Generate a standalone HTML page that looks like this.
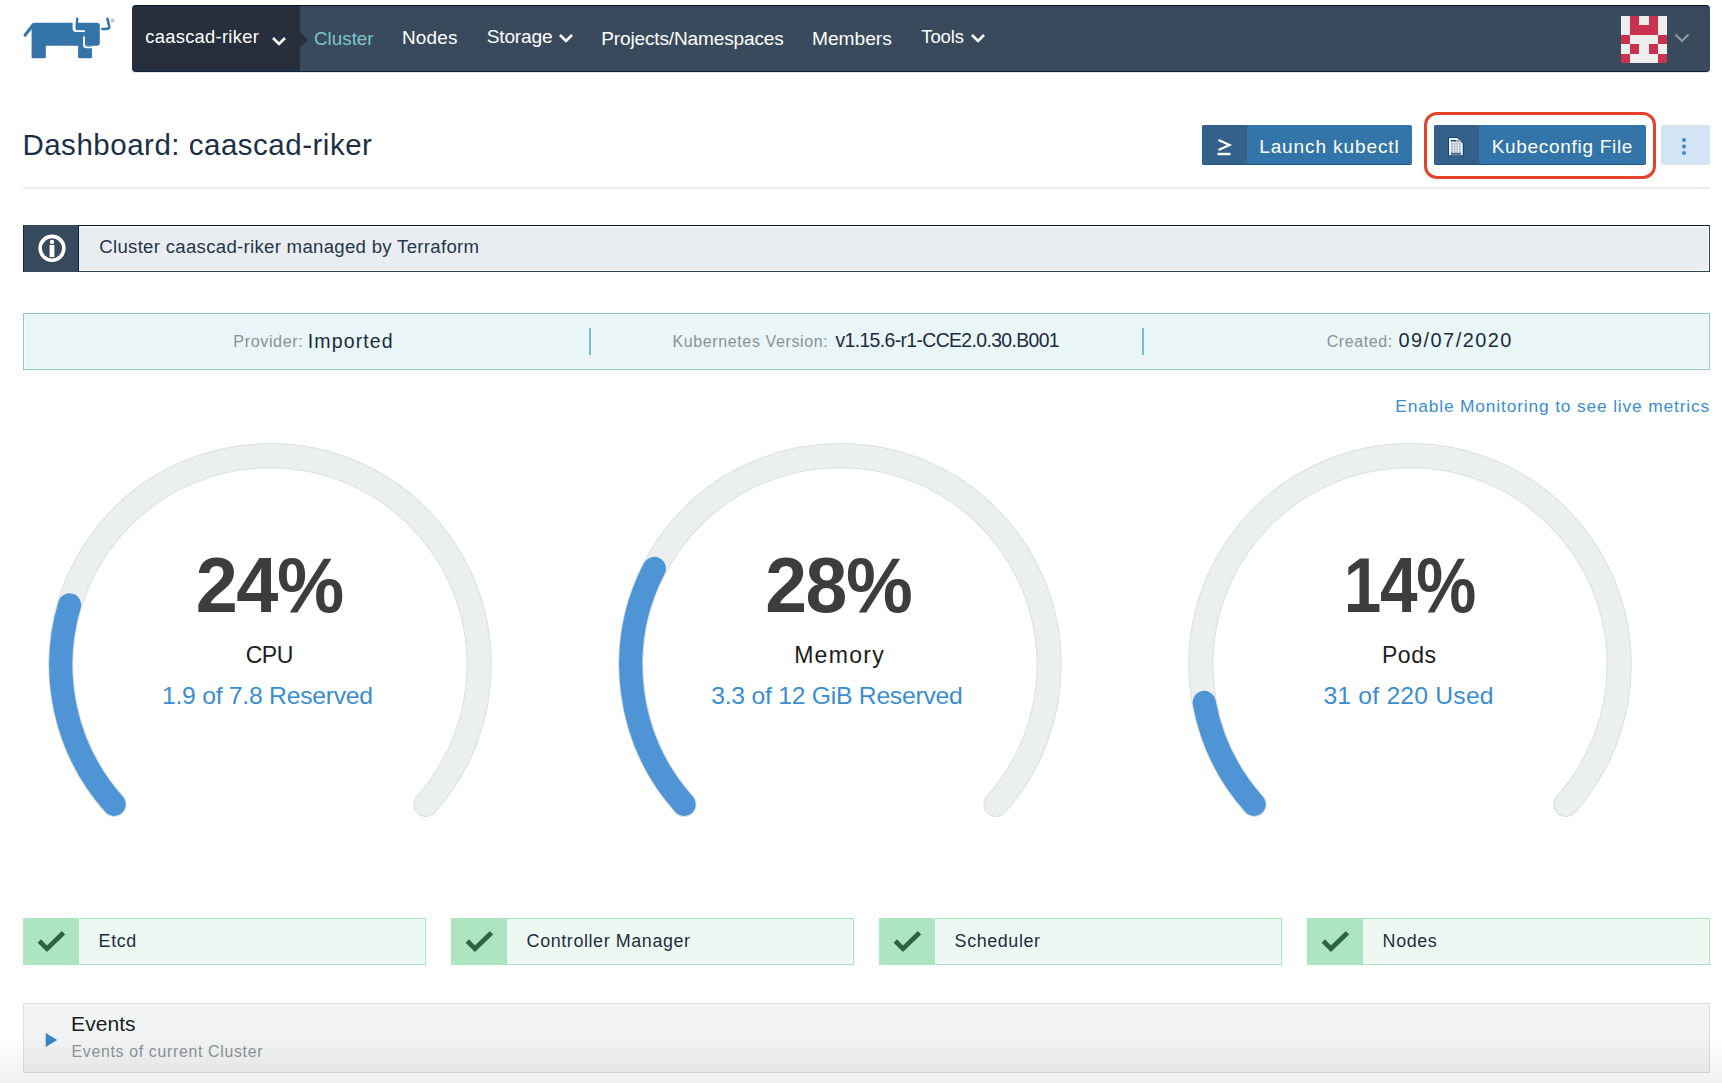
<!DOCTYPE html>
<html><head><meta charset="utf-8">
<style>
*{margin:0;padding:0;box-sizing:border-box}
html,body{width:1722px;height:1083px;overflow:hidden;background:#fff;font-family:"Liberation Sans",sans-serif}
.abs{position:absolute}
.t{position:absolute;white-space:nowrap;line-height:1}
#nav{left:132px;top:5px;width:1578px;height:67px;background:#394a5d;border-radius:4px;border-top:1px solid #06112e;border-bottom:1.5px solid #0b2440;overflow:hidden;box-shadow:0 1px 1px rgba(0,0,0,.12)}
#navdark{left:0;top:0;width:168px;height:100%;background:#262f3b}
#hr{left:23px;top:186.5px;width:1687px;height:2px;background:#e8edef}
.btn{position:absolute;top:125px;height:40px;background:#3475a9;border-radius:2px;overflow:hidden;border-bottom:1px solid #1f5887}
.btn .ic{position:absolute;left:0;top:0;width:45px;height:40px;background:#336189}
#banner{left:23px;top:225px;width:1687px;height:46.7px;background:#e9ecf0;border-top:1px solid #0f1730;border-bottom:1.5px solid #2d4661;border-right:1.5px solid #2d4661;box-shadow:inset 0 1.5px 0 #f5f7f9,inset -1.5px -1.5px 0 #f5f7f9}
#banner .ic{position:absolute;left:0;top:-1px;width:56px;height:46.7px;background:#384a5e;border-left:1px solid #0c2a4a;border-right:1px solid #0c1f38}
#strip{left:23px;top:313px;width:1687px;height:57px;background:#e9f5f6;border:1.5px solid #8cc7ce;box-shadow:inset 0 0 0 1px #f3fafb}
.card{position:absolute;top:918px;height:46.5px;width:402.5px;background:#eef8f2;border:1.4px solid #a6e3bb;box-shadow:inset 0 0 0 1px #f6fbf8}
.card .ic{position:absolute;left:-1.4px;top:-1.4px;width:56px;height:46.5px;background:#ade5c1}
#events{left:23px;top:1002.5px;width:1687px;height:70.5px;background:linear-gradient(#f3f4f4,#f0f1f1);border:1.5px solid #d8dfe2}
#shade{left:0;top:1035px;width:1722px;height:48px;background:linear-gradient(rgba(0,0,0,0),rgba(0,0,0,0.06))}
</style></head>
<body>
<svg class="abs" style="left:20px;top:12px" width="100" height="50" viewBox="20 12 100 50">
 <g fill="#3574a8">
  <path d="M34.5 22.7 L73.3 22.7 L73.3 30.6 L84.5 30.6 L84.5 45.7 L92 45.7 L92 57 Q92 58.2 90.8 58.2 L79.3 58.2 Q78.1 58.2 78.1 57 L78.1 45.7 L45.8 45.7 L45.8 57 Q45.8 58.2 44.6 58.2 L32.8 58.2 Q31.6 58.2 31.6 57 L31.6 25.6 Q31.6 22.7 34.5 22.7 Z"/>
  <path d="M76 22.7 L97 22.7 Q99.8 22.7 99.8 25.5 L99.8 43 Q99.8 45.7 97 45.7 L86 45.7 Q84.2 45.7 84.2 44 L84.2 30.6 L76 30.6 Z"/>
 </g>
 <g fill="none" stroke="#3574a8" stroke-linecap="round">
  <path d="M25 35.2 L33 25" stroke-width="3"/>
  <path d="M77.2 18.8 L76.6 27.3 Q76.5 29 78.3 29 L84 29" stroke-width="2.4"/>
  <path d="M107.4 18.8 L109.2 26.3 Q109.6 28.9 107 28.9 L102.3 29" stroke-width="2.6"/>
 </g>
 <g fill="none" stroke="#fff" stroke-width="1.8">
  <path d="M73.5 22 L73.5 28.6 Q73.5 31.1 76 31.1 L85 31.1"/>
  <path d="M84 36.5 L84 44.7 Q84 47.3 86.6 47.3 L93 47.3"/>
 </g>
 <circle cx="112.6" cy="20.4" r="2" fill="#b3cbe2"/>
</svg>
<div id="nav" class="abs"><div id="navdark" class="abs"></div></div>
<svg class="abs" style="left:299px;top:31px" width="10" height="17" viewBox="0 0 10 17"><path d="M0 0 L9 8.5 L0 17 Z" fill="#262f3b"/></svg>
<div class="t" style="left:145.27px;top:27.92px;font-size:18.33px;letter-spacing:0.29px;color:#fff;">caascad-riker</div>
<svg class="abs" style="left:270px;top:34.5px" width="18" height="14" viewBox="0 0 18 14"><path d="M3 3 L9 9 L15 3" fill="none" stroke="#fff" stroke-width="2.6"/></svg>
<div class="t" style="left:314.06px;top:29.54px;font-size:18.78px;letter-spacing:0.01px;color:#7bc5cd;">Cluster</div>
<div class="t" style="left:401.89px;top:29.42px;font-size:18.92px;letter-spacing:0.25px;color:#fff;">Nodes</div>
<div class="t" style="left:486.74px;top:27.03px;font-size:19.14px;letter-spacing:-0.19px;color:#fff;">Storage</div>
<svg class="abs" style="left:557px;top:31.5px" width="18" height="14" viewBox="0 0 18 14"><path d="M3 3 L9 9 L15 3" fill="none" stroke="#fff" stroke-width="2.6"/></svg>
<div class="t" style="left:601.28px;top:28.80px;font-size:19.06px;letter-spacing:-0.15px;color:#fff;">Projects/Namespaces</div>
<div class="t" style="left:812.07px;top:28.72px;font-size:19.16px;letter-spacing:-0.03px;color:#fff;">Members</div>
<div class="t" style="left:921.23px;top:27.62px;font-size:18.45px;letter-spacing:-0.06px;color:#fff;">Tools</div>
<svg class="abs" style="left:969px;top:31.5px" width="18" height="14" viewBox="0 0 18 14"><path d="M3 3 L9 9 L15 3" fill="none" stroke="#fff" stroke-width="2.6"/></svg>
<svg class="abs" style="left:1621px;top:16px" width="46" height="47" viewBox="0 0 5 5" preserveAspectRatio="none" shape-rendering="crispEdges">
 <rect width="5" height="5" fill="#efefef"/>
 <g fill="#c8324f">
  <rect x="1" y="0" width="1" height="2"/><rect x="3" y="0" width="1" height="2"/><rect x="2" y="1" width="1" height="1"/>
  <rect x="0" y="2" width="1" height="1"/><rect x="4" y="2" width="1" height="1"/>
  <rect x="1" y="3" width="1" height="1"/><rect x="3" y="3" width="1" height="1"/>
  <rect x="0" y="4" width="1" height="1"/><rect x="4" y="4" width="1" height="1"/>
 </g>
</svg>
<svg class="abs" style="left:1673px;top:31px" width="18" height="14" viewBox="0 0 18 14"><path d="M2.5 3.5 L9 10 L15.5 3.5" fill="none" stroke="#8e979f" stroke-width="2.2"/></svg>
<div class="t" style="left:22.40px;top:129.93px;font-size:29.49px;letter-spacing:0.52px;color:#1c2f45;">Dashboard: caascad-riker</div>
<div id="hr" class="abs"></div>
<div class="btn" style="left:1202px;width:210px"><div class="ic"></div></div>
<svg class="abs" style="left:1215px;top:137px" width="18" height="20" viewBox="0 0 18 20"><path d="M3.5 3 L14.5 8 L3.5 13" fill="none" stroke="#fff" stroke-width="2.2"/><path d="M2.5 17 H15.5" stroke="#fff" stroke-width="2.4"/></svg>
<div class="t" style="left:1259.17px;top:136.98px;font-size:19.08px;letter-spacing:0.86px;color:#fff;">Launch kubectl</div>
<div class="btn" style="left:1434px;width:212px"><div class="ic"></div></div>
<svg class="abs" style="left:1447px;top:136px" width="18" height="21" viewBox="0 0 18 21">
 <path d="M1 1 H10.8 L16.9 7.2 V20.2 H1 Z" fill="#0d4677"/>
 <path d="M2 2 H10.3 L15.8 7.6 V19.2 H2 Z" fill="#eef1f5"/>
 <rect x="4" y="4" width="9.8" height="14.5" fill="#a3b1c2"/>
 <g stroke="#eef1f5" stroke-width="0.8"><path d="M4 6.6H14M4 9.3H14M4 12H14M4 14.7H14M6.5 4V18.5M9 6.6V18.5M11.5 6.6V18.5"/></g>
 <path d="M4 4.6H9M4 17.9H14" stroke="#0d3f6e" stroke-width="1.1"/>
</svg>
<div class="t" style="left:1491.68px;top:137.07px;font-size:18.98px;letter-spacing:0.71px;color:#fff;">Kubeconfig File</div>
<div class="abs" style="left:1424px;top:112px;width:232px;height:67px;border:3px solid #e2432a;border-radius:13px"></div>
<div class="abs" style="left:1661px;top:125px;width:49px;height:40px;background:#d3e5f5;border-radius:2px"></div>
<svg class="abs" style="left:1678px;top:137px" width="12" height="20" viewBox="0 0 12 20"><g fill="#3f88c8"><circle cx="6" cy="3" r="2"/><circle cx="6" cy="9.5" r="2"/><circle cx="6" cy="16" r="2"/></g></svg>
<div id="banner" class="abs"><div class="ic"></div></div>
<svg class="abs" style="left:36px;top:232px" width="32" height="32" viewBox="0 0 32 32">
 <circle cx="16" cy="16.3" r="11.9" fill="none" stroke="#fff" stroke-width="3.6"/>
 <circle cx="16" cy="9.9" r="2.2" fill="#fff"/>
 <path d="M16 12.9 V25.1" stroke="#fff" stroke-width="4.8"/>
</svg>
<div class="t" style="left:99.27px;top:237.78px;font-size:18.62px;letter-spacing:0.29px;color:#25374b;">Cluster caascad-riker managed by Terraform</div>
<div id="strip" class="abs"></div>
<div class="abs" style="left:589px;top:328px;width:2px;height:27px;background:#78bcc4"></div>
<div class="abs" style="left:1142px;top:328px;width:2px;height:27px;background:#78bcc4"></div>
<div class="t" style="left:233.30px;top:333.19px;font-size:16.25px;letter-spacing:0.56px;color:#8a9196;">Provider:</div>
<div class="t" style="left:307.74px;top:331.90px;font-size:19.52px;letter-spacing:1.13px;color:#1b2b40;">Imported</div>
<div class="t" style="left:672.42px;top:333.18px;font-size:16.02px;letter-spacing:0.62px;color:#8a9196;">Kubernetes Version:</div>
<div class="t" style="left:835.51px;top:330.75px;font-size:19.35px;letter-spacing:-0.61px;color:#1b2b40;">v1.15.6-r1-CCE2.0.30.B001</div>
<div class="t" style="left:1326.70px;top:334.22px;font-size:15.98px;letter-spacing:0.62px;color:#8a9196;">Created:</div>
<div class="t" style="left:1398.50px;top:331.37px;font-size:19.92px;letter-spacing:1.47px;color:#1b2b40;">09/07/2020</div>
<div class="t" style="left:1395.31px;top:398.24px;font-size:17.37px;letter-spacing:0.84px;color:#3b8dd0;">Enable Monitoring to see live metrics</div>
<svg class="abs" style="left:0;top:420px" width="1722" height="420" viewBox="0 420 1722 420">
<path d="M114.10 804.30 A209.2 209.2 0 1 1 425.90 804.30" fill="none" stroke="#d8e0e3" stroke-width="25.2" stroke-linecap="round"/>
<path d="M114.10 804.30 A209.2 209.2 0 1 1 425.90 804.30" fill="none" stroke="#ebeff0" stroke-width="23.2" stroke-linecap="round"/>
<path d="M114.10 804.30 A209.2 209.2 0 0 1 69.54 604.95" fill="none" stroke="#4f94d4" stroke-width="23.2" stroke-linecap="round"/>
<path d="M684.10 804.30 A209.2 209.2 0 1 1 995.90 804.30" fill="none" stroke="#d8e0e3" stroke-width="25.2" stroke-linecap="round"/>
<path d="M684.10 804.30 A209.2 209.2 0 1 1 995.90 804.30" fill="none" stroke="#ebeff0" stroke-width="23.2" stroke-linecap="round"/>
<path d="M684.10 804.30 A209.2 209.2 0 0 1 654.31 568.45" fill="none" stroke="#4f94d4" stroke-width="23.2" stroke-linecap="round"/>
<path d="M1254.10 804.30 A209.2 209.2 0 1 1 1565.90 804.30" fill="none" stroke="#d8e0e3" stroke-width="25.2" stroke-linecap="round"/>
<path d="M1254.10 804.30 A209.2 209.2 0 1 1 1565.90 804.30" fill="none" stroke="#ebeff0" stroke-width="23.2" stroke-linecap="round"/>
<path d="M1254.10 804.30 A209.2 209.2 0 0 1 1204.22 702.48" fill="none" stroke="#4f94d4" stroke-width="23.2" stroke-linecap="round"/>
</svg>
<div class="t" style="left:-30.50px;width:600px;text-align:center;top:546.08px;font-size:78.49px;letter-spacing:-1.50px;text-indent:-1.50px;color:#3d3d3d;font-weight:bold;transform:scaleX(0.964)">24%</div>
<div class="t" style="left:-30.50px;width:600px;text-align:center;top:643.60px;font-size:23.06px;letter-spacing:-0.53px;text-indent:-0.53px;color:#1d1d1d;">CPU</div>
<div class="t" style="left:-32.50px;width:600px;text-align:center;top:684.10px;font-size:24.71px;letter-spacing:-0.25px;text-indent:-0.25px;color:#3b8dd0;">1.9 of 7.8 Reserved</div>
<div class="t" style="left:539.00px;width:600px;text-align:center;top:546.08px;font-size:78.49px;letter-spacing:-1.50px;text-indent:-1.50px;color:#3d3d3d;font-weight:bold;transform:scaleX(0.957)">28%</div>
<div class="t" style="left:539.00px;width:600px;text-align:center;top:643.60px;font-size:23.06px;letter-spacing:1.30px;text-indent:1.30px;color:#1d1d1d;">Memory</div>
<div class="t" style="left:537.00px;width:600px;text-align:center;top:684.10px;font-size:24.71px;letter-spacing:-0.25px;text-indent:-0.25px;color:#3b8dd0;">3.3 of 12 GiB Reserved</div>
<div class="t" style="left:1109.50px;width:600px;text-align:center;top:546.08px;font-size:78.49px;letter-spacing:-1.50px;text-indent:-1.50px;color:#3d3d3d;font-weight:bold;transform:scaleX(0.86)">14%</div>
<div class="t" style="left:1109.00px;width:600px;text-align:center;top:643.60px;font-size:23.06px;letter-spacing:0.50px;text-indent:0.50px;color:#1d1d1d;">Pods</div>
<div class="t" style="left:1108.50px;width:600px;text-align:center;top:684.10px;font-size:24.71px;letter-spacing:0.20px;text-indent:0.20px;color:#3b8dd0;">31 of 220 Used</div>
<div class="card" style="left:23px"><div class="ic"></div></div>
<div class="t" style="left:98.60px;top:932.77px;font-size:17.91px;letter-spacing:0.6px;color:#1e2d42">Etcd</div>
<div class="card" style="left:451px"><div class="ic"></div></div>
<div class="t" style="left:526.60px;top:932.77px;font-size:17.91px;letter-spacing:0.6px;color:#1e2d42">Controller Manager</div>
<div class="card" style="left:879px"><div class="ic"></div></div>
<div class="t" style="left:954.60px;top:932.77px;font-size:17.91px;letter-spacing:0.6px;color:#1e2d42">Scheduler</div>
<div class="card" style="left:1307px"><div class="ic"></div></div>
<div class="t" style="left:1382.60px;top:932.77px;font-size:17.91px;letter-spacing:0.6px;color:#1e2d42">Nodes</div>
<svg class="abs" style="left:0;top:920px" width="1722" height="40" viewBox="0 920 1722 40"><g fill="none" stroke="#2f6340" stroke-width="4.7"><path d="M39.3 941 L47 948.8 L63.5 932.8"/><path d="M467.3 941 L475 948.8 L491.5 932.8"/><path d="M895.3 941 L903 948.8 L919.5 932.8"/><path d="M1323.3 941 L1331 948.8 L1347.5 932.8"/></g></svg>
<div id="events" class="abs"></div>
<svg class="abs" style="left:44px;top:1031px" width="16" height="18" viewBox="0 0 16 18"><path d="M1.7 1.9 L13.3 9 L1.7 16.1 Z" fill="#3a85c8"/></svg>
<div class="t" style="left:71.12px;top:1013.22px;font-size:21.04px;letter-spacing:0.03px;color:#1b1f24;">Events</div>
<div class="t" style="left:71.53px;top:1044.02px;font-size:15.85px;letter-spacing:0.69px;color:#8c9399;">Events of current Cluster</div>
<div id="shade" class="abs"></div>
</body></html>
